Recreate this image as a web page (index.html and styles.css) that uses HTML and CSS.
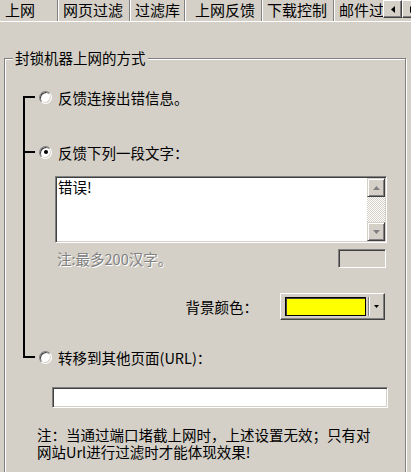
FILE: index.html
```html
<!DOCTYPE html>
<html lang="zh-CN">
<head>
  <meta charset="UTF-8">
  <meta name="viewport" content="width=device-width, initial-scale=1.0">
  <title>上网反馈</title>
  <link rel="stylesheet" href="styles.css">
</head>
<body>
  <div class="dialog">
    <!-- Tab strip -->
    <div class="tabs">
      <div class="tab-list">
        <div class="tab tab-1">上网</div>
        <div class="tab tab-2">网页过滤</div>
        <div class="tab tab-3">过滤库</div>
        <div class="tab tab-4 active">上网反馈</div>
        <div class="tab tab-5">下载控制</div>
        <div class="tab tab-6">邮件过滤</div>
      </div>
      <div class="tab-scroll">
        <button class="spin">
          <svg width="4" height="7" viewBox="0 0 4 7"><path d="M4 0V7L0 3.5Z" fill="#000"/></svg>
        </button>
        <button class="spin">
          <svg width="4" height="7" viewBox="0 0 4 7"><path d="M0 0V7L4 3.5Z" fill="#000"/></svg>
        </button>
      </div>
    </div>

    <!-- Tab page -->
    <div class="page">
      <div class="group">
        <div class="group-title">封锁机器上网的方式</div>

        <div class="options">
          <div class="opt"><span class="radio"></span>反馈连接出错信息。</div>

          <div class="opt opt-2"><span class="radio checked"></span>反馈下列一段文字：</div>

          <!-- Message box -->
          <div class="memo">
            <div class="memo-text">错误!</div>
            <div class="vscroll">
              <div class="sb-btn">
                <svg width="7" height="4" viewBox="0 0 7 4"><path d="M0 4H7L3.5 0Z" fill="#808080"/></svg>
              </div>
              <div class="sb-track"></div>
              <div class="sb-btn">
                <svg width="7" height="4" viewBox="0 0 7 4"><path d="M0 0H7L3.5 4Z" fill="#808080"/></svg>
              </div>
            </div>
          </div>

          <div class="memo-note">
            <span class="disabled-text">注:最多200汉字。</span>
            <span class="count-box"></span>
          </div>

          <div class="color-row">
            <span>背景颜色：</span>
            <div class="combo">
              <span class="swatch"></span>
              <span class="drop">
                <svg width="5" height="3" viewBox="0 0 5 3"><path d="M0 0H5L2.5 3Z" fill="#000"/></svg>
              </span>
            </div>
          </div>

          <div class="opt opt-3"><span class="radio"></span>转移到其他页面(URL)：</div>
        </div>

        <div class="url-input"></div>

        <p class="hint">注：当通过端口堵截上网时，上述设置无效；只有对<br>网站Url进行过滤时才能体现效果!</p>
      </div>
    </div>
  </div>
</body>
</html>
```

FILE: styles.css
```css
/* Reset and Base Styles */
* {
  margin: 0;
  padding: 0;
  box-sizing: border-box;
}

body {
  width: 411px;
  height: 472px;
  overflow: hidden;
  background: #d4d0c8;
  color: #000;
  font-family: "Noto Sans CJK SC", "Liberation Sans", sans-serif;
  font-size: 14.5px;
}

.dialog {
  display: flex;
  flex-direction: column;
  height: 100%;
}

/* Tab strip */
.tabs {
  display: flex;
  height: 22px;
  border-bottom: 1px solid #fff;
}

.tab-list {
  display: flex;
  flex: 1;
  overflow: hidden;
}

.tab {
  flex: none;
  height: 21px;
  padding-left: 4px;
  font-size: 15px;
  line-height: 20px;
  white-space: nowrap;
  border-left: 1px solid #fff;
  border-right: 1px solid #808080;
}

.tab-1 { width: 58px; border-left-color: transparent; }
.tab-2 { width: 72px; }
.tab-3 { width: 55px; }
.tab-4 { width: 77px; }
.tab-5 { width: 72px; }
.tab-6 { width: 80px; }

.tab.active {
  height: 22px;
  margin-bottom: -1px;
  padding-left: 9px;
  background: #d4d0c8;
  position: relative;
}

.tab-scroll {
  display: flex;
  width: 28px;
  height: 18px;
  overflow: visible;
}

.spin {
  flex: none;
  display: flex;
  align-items: center;
  justify-content: center;
  width: 19px;
  height: 18px;
  background: #d4d0c8;
  border: 1px solid;
  border-color: #fff #404040 #404040 #fff;
  box-shadow: inset -1px -1px 0 #808080;
}

/* Tab page */
.page {
  flex: 1;
}

.group {
  margin: 36px 5px 0 4px;
  height: 440px;
  border: 1px solid #808080;
  box-shadow: inset 1px 1px 0 #fff, 1px 1px 0 #fff;
}

.group-title {
  width: max-content;
  margin: -9px 0 0 8px;
  padding: 0 2px;
  line-height: 16px;
  background: #d4d0c8;
}

/* Option bracket */
.options {
  position: relative;
  margin: 23px 18px 0 18px;
}

.options::before {
  content: "";
  position: absolute;
  left: 0;
  top: 8px;
  bottom: 8px;
  width: 2px;
  background: #000;
}

.opt {
  position: relative;
  display: flex;
  align-items: center;
  height: 16px;
  padding-left: 16px;
  white-space: nowrap;
}

.opt::before {
  content: "";
  position: absolute;
  left: 0;
  top: 7px;
  width: 12px;
  height: 2px;
  background: #000;
}

.opt-2 { margin-top: 39px; }
.opt-3 { margin-top: 29px; }

.radio {
  flex: none;
  display: flex;
  align-items: center;
  justify-content: center;
  width: 13px;
  height: 13px;
  margin-right: 6px;
  border-radius: 50%;
  background: #fff;
  border: 1px solid;
  border-color: #808080 #fff #fff #808080;
  box-shadow: inset 1px 1px 0 #404040, inset -1px -1px 0 #d4d0c8;
}

.radio.checked::after {
  content: "";
  width: 4px;
  height: 4px;
  border-radius: 50%;
  background: #000;
}

/* Message box */
.memo {
  display: flex;
  height: 67px;
  margin: 16px 0 0 32px;
  background: #fff;
  border: 1px solid;
  border-color: #808080 #fff #fff #808080;
  box-shadow: inset 1px 1px 0 #404040, inset -1px -1px 0 #d4d0c8;
  padding: 1px;
}

.memo-text {
  flex: 1;
  padding: 1px 0 0 1px;
  line-height: 16px;
}

.vscroll {
  display: flex;
  flex-direction: column;
  width: 18px;
}

.sb-btn {
  display: flex;
  align-items: center;
  justify-content: center;
  height: 19px;
  background: #d4d0c8;
  border: 1px solid;
  border-color: #d4d0c8 #404040 #404040 #d4d0c8;
  box-shadow: inset 1px 1px 0 #fff, inset -1px -1px 0 #808080;
}

.sb-track {
  flex: 1;
  background: repeating-conic-gradient(#fff 0 25%, #d4d0c8 0 50%) 0 0 / 2px 2px;
}

.memo-note {
  display: flex;
  align-items: center;
  justify-content: space-between;
  height: 19px;
  margin: 6px 1px 0 34px;
}

.disabled-text {
  color: #808080;
  text-shadow: 1px 1px 0 #fff;
}

.count-box {
  width: 48px;
  height: 19px;
  border: 1px solid;
  border-color: #808080 #fff #fff #808080;
  box-shadow: inset 1px 1px 0 #404040, inset -1px -1px 0 #d4d0c8;
}

/* Background colour picker */
.color-row {
  display: flex;
  align-items: center;
  justify-content: flex-end;
  gap: 22px;
  height: 27px;
  margin: 25px 2px 0 0;
}

.combo {
  display: flex;
  align-items: center;
  width: 105px;
  height: 27px;
  padding: 3px 1px 3px 4px;
  border: 1px solid;
  border-color: #fff #404040 #404040 #fff;
  box-shadow: inset -1px -1px 0 #808080;
}

.swatch {
  flex: 1;
  height: 19px;
  background: #ffff00;
  border: 1px solid #000;
  box-shadow: inset 1px 1px 0 #404040;
}

.drop {
  display: flex;
  align-items: center;
  justify-content: center;
  width: 15px;
  height: 100%;
  margin-left: 2px;
  border-left: 1px solid #808080;
  box-shadow: inset 1px 0 0 #fff;
}

/* URL field and hint */
.url-input {
  width: 336px;
  height: 21px;
  margin: 22px 0 0 47px;
  background: #fff;
  border: 1px solid;
  border-color: #808080 #fff #fff #808080;
  box-shadow: inset 1px 1px 0 #404040, inset -1px -1px 0 #d4d0c8;
}

.hint {
  margin-top: 18px;
  padding-left: 32px;
  line-height: 17px;
  white-space: nowrap;
}
```
